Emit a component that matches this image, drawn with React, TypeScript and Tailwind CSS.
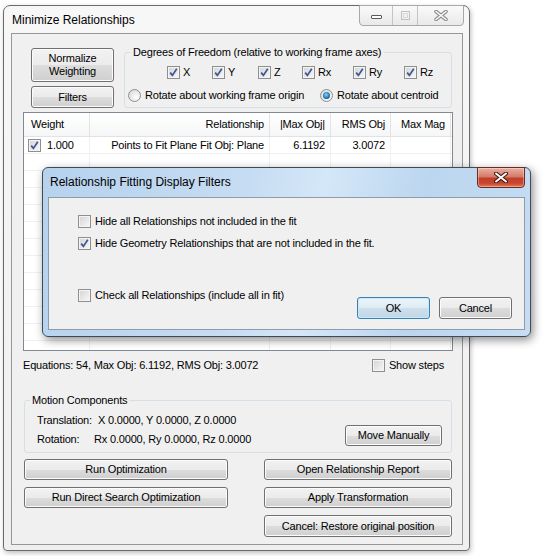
import type { ReactNode } from "react";

const Check = ({ checked }: { checked?: boolean }) => (
  <span className="flex h-[13px] w-[13px] shrink-0 items-center justify-center border border-[#8e8f8f] bg-[linear-gradient(135deg,#d4d4d4,#f8f8f8)] shadow-[inset_0_0_0_1px_#f4f4f4]">
    {checked && (
      <svg width="9" height="9" viewBox="0 0 9 9">
        <path d="M1.2 4.6 L3.4 7.4 L7.8 0.8" stroke="#3d5496" strokeWidth="1.7" fill="none" />
      </svg>
    )}
  </span>
);

const Radio = ({ checked }: { checked?: boolean }) => (
  <span className="flex h-[13px] w-[13px] shrink-0 items-center justify-center rounded-full border border-[#8e8f8f] bg-[radial-gradient(circle_at_65%_65%,#ffffff,#d2d2d2)]">
    {checked && (
      <span className="h-[7px] w-[7px] rounded-full bg-[radial-gradient(circle_at_45%_40%,#8fd3f7,#1a6fb3_60%,#0b3d6e)]" />
    )}
  </span>
);

const Btn = ({ children, className }: { children: ReactNode; className: string }) => (
  <div
    className={`flex shrink-0 items-center justify-center rounded-[3px] border border-[#707070] bg-[linear-gradient(to_bottom,#f2f2f2_0%,#ebebeb_50%,#dddddd_51%,#cfcfcf_100%)] text-center leading-[13px] text-black shadow-[inset_0_0_0_1px_#fcfcfc] ${className}`}
  >
    {children}
  </div>
);

const Label = ({ checked, children }: { checked?: boolean; children: ReactNode }) => (
  <div className="flex h-[14px] items-center gap-[4px]">
    <Check checked={checked} />
    <span>{children}</span>
  </div>
);

const dof = [
  { name: "X", w: "w-[45px]" },
  { name: "Y", w: "w-[46px]" },
  { name: "Z", w: "w-[44px]" },
  { name: "Rx", w: "w-[51px]" },
  { name: "Ry", w: "w-[51px]" },
  { name: "Rz", w: "w-[40px]" },
];

const cols = [
  { title: "Weight", w: "w-[66px]", align: "justify-start pl-[7px]" },
  { title: "Relationship", w: "w-[180px]", align: "justify-end pr-[5px]" },
  { title: "|Max Obj|", w: "w-[61px]", align: "justify-end pr-[5px]" },
  { title: "RMS Obj", w: "w-[60px]", align: "justify-end pr-[5px]" },
  { title: "Max Mag", w: "w-[60px]", align: "justify-end pr-[5px]" },
];

export default function App() {
  return (
    <div className="relative h-[556px] w-[543px] overflow-hidden bg-white pl-[3px] pt-[5px] font-['Liberation_Sans',Arial,sans-serif] text-[11px] tracking-[-0.18px] text-black">
      {/* main window */}
      <div className="flex h-[546px] w-[467px] flex-col rounded-t-[7px] rounded-b-[4px] border border-[#6a6a6a] bg-[linear-gradient(to_bottom,#f7f7f7,#efefef)] shadow-[1px_2px_5px_rgba(0,0,0,0.25)]">
        <div className="flex h-[27px] shrink-0 justify-between">
          <span className="self-center pl-[8px] text-[12px] tracking-[0px]">Minimize Relationships</span>
          <div className="mr-[5px] mt-[-1px] flex h-[21px] rounded-b-[4px] border border-[#a8a8a8] bg-[linear-gradient(to_bottom,#fafafa,#e9e9e9)]">
            <div className="flex w-[33px] items-center justify-center border-r border-[#c4c4c4]">
              <span className="mt-[2px] h-[4px] w-[11px] rounded-[1px] border border-[#5a5a5a] bg-white" />
            </div>
            <div className="flex w-[25px] items-center justify-center border-r border-[#c4c4c4]">
              <span className="flex h-[9px] w-[9px] items-center justify-center border border-[#c2c2c2]">
                <span className="h-[5px] w-[5px] border border-[#dadada]" />
              </span>
            </div>
            <div className="flex w-[45px] items-center justify-center">
              <svg width="14" height="11" viewBox="0 0 14 11">
                <path d="M2 1.5 L12 9.5 M12 1.5 L2 9.5" stroke="#8c8c8c" strokeWidth="3.6" strokeLinecap="round" />
                <path d="M2 1.5 L12 9.5 M12 1.5 L2 9.5" stroke="#fbfbfb" strokeWidth="1.6" strokeLinecap="round" />
              </svg>
            </div>
          </div>
        </div>

        {/* client */}
        <div className="mb-[5px] ml-[7px] mr-[6px] flex flex-1 flex-col border border-[#979797] bg-[#f0f0f0]">
          <div className="mt-[12px] flex">
            <div className="ml-[19px] flex w-[83px] flex-col gap-[4px] pt-[2px]">
              <Btn className="h-[34px] w-[83px]">
                Normalize
                <br />
                Weighting
              </Btn>
              <Btn className="h-[22px] w-[83px]">Filters</Btn>
            </div>
            <fieldset className="ml-[10px] h-[62px] w-[328px] rounded-[3px] border border-[#d5dfe5]">
              <legend className="ml-[5px] px-[3px] leading-[13px]">
                Degrees of Freedom (relative to working frame axes)
              </legend>
              <div className="ml-[42px] mt-[6px] flex h-[14px]">
                {dof.map((d) => (
                  <div key={d.name} className={`flex items-center gap-[3px] ${d.w}`}>
                    <Check checked />
                    <span>{d.name}</span>
                  </div>
                ))}
              </div>
              <div className="ml-[3px] mt-[9px] flex h-[14px]">
                <div className="flex w-[192px] items-center gap-[4px]">
                  <Radio />
                  <span>Rotate about working frame origin</span>
                </div>
                <div className="flex items-center gap-[4px]">
                  <Radio checked />
                  <span>Rotate about centroid</span>
                </div>
              </div>
            </fieldset>
          </div>

          {/* table */}
          <div className="ml-[11px] mt-[4px] h-[239px] w-[430px] overflow-hidden border border-[#828790] bg-white">
            <div className="flex h-[24px] border-b border-[#e2e2e2] bg-[linear-gradient(to_bottom,#ffffff,#f5f6f7)]">
              {cols.map((c) => (
                <div key={c.title} className={`flex items-center border-r border-[#e2e3e4] ${c.w} ${c.align}`}>
                  {c.title}
                </div>
              ))}
            </div>
            <div className="flex h-[17px] border-b border-[#f0f0f0]">
              <div className="flex w-[66px] items-center gap-[6px] border-r border-[#f0f0f0] pl-[4px]">
                <Check checked />
                <span>1.000</span>
              </div>
              <div className="flex w-[180px] items-center justify-end border-r border-[#f0f0f0] pr-[5px]">
                Points to Fit Plane Fit Obj: Plane
              </div>
              <div className="flex w-[61px] items-center justify-end border-r border-[#f0f0f0] pr-[5px]">
                6.1192
              </div>
              <div className="flex w-[60px] items-center justify-end border-r border-[#f0f0f0] pr-[5px]">
                3.0072
              </div>
              <div className="w-[60px] border-r border-[#f0f0f0]" />
            </div>
            {Array.from({ length: 12 }).map((_, i) => (
              <div key={i} className="flex h-[17px] border-b border-[#f0f0f0]">
                <div className="w-[66px] border-r border-[#f0f0f0]" />
                <div className="w-[180px] border-r border-[#f0f0f0]" />
                <div className="w-[61px] border-r border-[#f0f0f0]" />
                <div className="w-[60px] border-r border-[#f0f0f0]" />
                <div className="w-[60px] border-r border-[#f0f0f0]" />
              </div>
            ))}
          </div>

          <div className="ml-[11px] mr-[18px] mt-[7px] flex h-[14px] items-center justify-between">
            <span>Equations: 54, Max Obj: 6.1192, RMS Obj: 3.0072</span>
            <Label>Show steps</Label>
          </div>

          <fieldset className="ml-[12px] mt-[22px] h-[59px] w-[428px] rounded-[3px] border border-[#d5dfe5]">
            <legend className="ml-[5px] px-[2px] leading-[13px]">Motion Components</legend>
            <div className="flex items-end justify-between pr-[9px]">
              <div className="pl-[12px]">
                <div className="mt-[6px] flex h-[14px] items-center">
                  <span>Translation:</span>
                  <span className="ml-[6px]">X 0.0000, Y 0.0000, Z 0.0000</span>
                </div>
                <div className="mt-[5px] flex h-[14px] items-center">
                  <span className="w-[57px]">Rotation:</span>
                  <span>Rx 0.0000, Ry 0.0000, Rz 0.0000</span>
                </div>
              </div>
              <Btn className="h-[21px] w-[97px]">Move Manually</Btn>
            </div>
          </fieldset>

          <div className="ml-[12px] mt-[6px] flex gap-[36px]">
            <div className="flex flex-col gap-[7px]">
              <Btn className="h-[21px] w-[204px]">Run Optimization</Btn>
              <Btn className="h-[21px] w-[204px]">Run Direct Search Optimization</Btn>
            </div>
            <div className="flex flex-col gap-[7px]">
              <Btn className="h-[21px] w-[188px]">Open Relationship Report</Btn>
              <Btn className="h-[21px] w-[188px]">Apply Transformation</Btn>
              <Btn className="h-[22px] w-[188px]">Cancel: Restore original position</Btn>
            </div>
          </div>
        </div>
      </div>

      {/* filters dialog */}
      <div className="absolute left-[42px] top-[167px] flex h-[170px] w-[489px] flex-col rounded-[6px] border border-[#3f4a55] bg-[linear-gradient(100deg,#b6d2ed_0%,#c6dcf2_40%,#d4e7f8_55%,#bcd6ef_75%,#c6ddf3_100%)] shadow-[2px_3px_10px_rgba(0,0,0,0.45)]">
        <div className="flex h-[28px] shrink-0 justify-between">
          <span className="self-center pl-[7px] text-[12px] tracking-[0px]">Relationship Fitting Display Filters</span>
          <div className="mr-[5px] mt-[-1px] flex h-[21px] w-[48px] items-center justify-center rounded-b-[4px] border border-[#6b2b22] bg-[linear-gradient(to_bottom,#e8b1a3_0%,#d77a68_45%,#c23f2c_55%,#c8452e_80%,#e07b57_100%)] shadow-[inset_0_0_0_1px_rgba(255,255,255,0.35)]">
            <svg width="14" height="11" viewBox="0 0 14 11">
              <path d="M2 1.5 L12 9.5 M12 1.5 L2 9.5" stroke="#3e1812" strokeWidth="4" strokeLinecap="round" />
              <path d="M2 1.5 L12 9.5 M12 1.5 L2 9.5" stroke="#ffffff" strokeWidth="2" strokeLinecap="round" />
            </svg>
          </div>
        </div>
        <div className="mx-[5px] mb-[6px] mt-[1px] flex flex-1 flex-col border border-[#8f9ba8] bg-[#f0f0f0] pl-[29px] pt-[16px]">
          <Label>Hide all Relationships not included in the fit</Label>
          <div className="mt-[8px]">
            <Label checked>Hide Geometry Relationships that are not included in the fit.</Label>
          </div>
          <div className="mt-[38px] flex justify-between pr-[12px]">
            <Label>Check all Relationships (include all in fit)</Label>
            <div className="mt-[9px] flex gap-[9px]">
              <div className="flex h-[22px] w-[73px] items-center justify-center rounded-[3px] border border-[#3c7fb1] bg-[linear-gradient(to_bottom,#ecf4f9_0%,#dfebf3_50%,#cddfeb_51%,#c2d7e6_100%)] shadow-[inset_0_0_0_1px_#c5ebfb]">
                OK
              </div>
              <Btn className="h-[22px] w-[73px]">Cancel</Btn>
            </div>
          </div>
        </div>
      </div>
    </div>
  );
}
